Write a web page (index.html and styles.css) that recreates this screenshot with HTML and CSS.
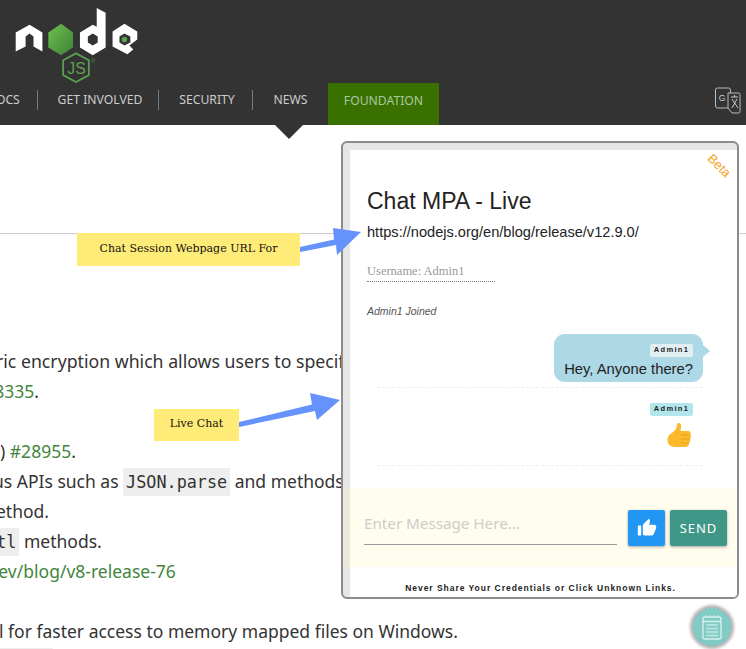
FILE: index.html
```html
<!DOCTYPE html>
<html lang="en">
<head>
    <meta charset="UTF-8">
    <meta name="viewport" content="width=device-width, initial-scale=1.0">
    <title>Node.js - Chat MPA</title>
    <link rel="stylesheet" href="styles.css">
</head>
<body>
    <header class="site-header">
        <svg class="logo" width="150" height="84" viewBox="0 0 150 84">
            <defs>
                <linearGradient id="leaf" x1="0" y1="0" x2="1" y2="1">
                    <stop offset="0" stop-color="#6cc24a"/>
                    <stop offset="1" stop-color="#3f7f3a"/>
                </linearGradient>
            </defs>
            <path fill="#fff" d="M15 33 29 25 42 33V52L33 47V37L29 34 25 37V47L15 52Z"/>
            <path fill="url(#leaf)" d="M61 24 73 33V48L61 56 48 48V33Z"/>
            <path fill="#fff" fill-rule="evenodd" d="M97 8 106 13V48L93 56 80 48V33L93 25 97 27ZM93 34 88 37V43L93 46 98 43V37Z"/>
            <path fill="#fff" d="M125 24 138 32V40L130 46 134 50 128 55 113 47V32Z"/>
            <path fill="#333" d="M125 34 120 37V43L125 46 131 43V37Z"/>
            <circle cx="125" cy="40" r="2.800" fill="#5fa04e"/>
            <path fill="none" stroke="#5a9f4f" stroke-width="1.800" d="M76 54 89 61V76L76 83 63 76V61Z"/>
            <text class="logo-js" x="76.500" y="75" text-anchor="middle">JS</text>
            <circle cx="93.500" cy="61" r="1.600" fill="none" stroke="#5fa04e" stroke-width=".5"/>
        </svg>
        <nav class="site-nav">
            <a class="nav-item nav-docs">DOCS</a>
            <a class="nav-item nav-involved">GET INVOLVED</a>
            <a class="nav-item nav-security">SECURITY</a>
            <a class="nav-item nav-news">NEWS</a>
            <a class="nav-item nav-foundation">FOUNDATION</a>
            <svg class="translate-icon" width="28" height="28" viewBox="0 0 28 28">
                <rect x="1.500" y="1" width="15" height="20" rx="2" fill="#333" stroke="#bbb"/>
                <text class="translate-g" x="8" y="13.500" text-anchor="middle">G</text>
                <path fill="#333" stroke="#bbb" d="M14 6H24.500A1.500 1.500 0 0 1 26 7.500V24.500A1.500 1.500 0 0 1 24.500 26H18L14 21Z"/>
                <path fill="none" stroke="#ccc" d="M17 10H24M20.500 8V10M23 12 18 21M18 12 24 21"/>
            </svg>
        </nav>
    </header>
    <div class="nav-pointer"></div>

    <main class="article">
        <hr class="rule">
        <p class="line line-first">ric encryption which allows users to specify a key</p>
        <p class="line line-cut"><a>#28335</a>.</p>
        <p class="line blank"></p>
        <p class="line"><span>)</span> <a>#28955</a>.</p>
        <p class="line line-apis">us APIs such as <code>JSON.parse</code> and methods</p>
        <p class="line line-method">ethod.</p>
        <p class="line line-code"><code>Intl</code> methods.</p>
        <p class="line line-link"><a>v8.dev/blog/v8-release-76</a></p>
        <p class="line blank"></p>
        <p class="line line-last">l for faster access to memory mapped files on Windows.</p>
        <p class="line"><code class="tail-code">process</code></p>
    </main>

    <section class="chat-panel">
        <div class="chat-inner">
            <h2 class="chat-title">Chat MPA - Live</h2>
            <div class="chat-url">https://nodejs.org/en/blog/release/v12.9.0/</div>
            <div class="chat-user">Username: Admin1</div>
            <div class="chat-status">Admin1 Joined</div>
            <div class="messages">
                <div class="message">
                    <div class="bubble">
                        <span class="sender">Admin1</span>
                        <div class="bubble-text">Hey, Anyone there?</div>
                    </div>
                </div>
                <div class="message message-like">
                    <span class="sender sender-plain">Admin1</span>
                    <svg class="like-emoji" width="26" height="27" viewBox="0 0 26 27">
                        <path fill="#fbb92b" d="M12.500 1C14.500 1 15.500 2.500 15.200 4.500L14.500 9H22C24.500 9 25 11 24.500 12.500 25.500 14 25 16 24 17 24.500 18.500 24 20.500 23 21 23 23.500 21.500 25 19.500 25H10C6 25 1.500 24 1.500 18 1.500 14 4 12 6.500 10.500 8.500 9 10.500 7 11 3 11.100 1.800 11.500 1 12.500 1Z"/>
                        <path fill="none" stroke="#e39a17" stroke-width=".8" d="M15 13H24M15 17H24M15 21H23"/>
                    </svg>
                </div>
            </div>
            <form class="composer">
                <input class="composer-input" type="text" placeholder="Enter Message Here...">
                <button class="btn btn-like" type="button">
                    <svg width="20" height="20" viewBox="0 0 24 24"><path fill="#fff" d="M1 21h4V9H1v12zm22-11c0-1.100-.9-2-2-2h-6.310l.95-4.570.03-.32c0-.41-.17-.79-.44-1.060L14.170 1 7.590 7.590C7.220 7.950 7 8.450 7 9v10c0 1.100.9 2 2 2h9c.83 0 1.540-.5 1.840-1.220l3.020-7.050c.09-.23.14-.47.14-.73v-2z"/></svg>
                </button>
                <button class="btn btn-send" type="button">SEND</button>
            </form>
            <div class="chat-note">Never Share Your Credentials or Click Unknown Links.</div>
        </div>
        <span class="beta">Beta</span>
    </section>

    <div class="note note-url">Chat Session Webpage URL For</div>
    <div class="note note-live">Live Chat</div>

    <svg class="arrows" width="746" height="649" viewBox="0 0 746 649">
        <path fill="#6693fb" d="M300 247 334 239.500 333 228 361 232 337 255 336 245 300 252Z"/>
        <path fill="#6693fb" d="M239 422 312 404.500 310 393 340 400 317 420 315 411 239 427Z"/>
    </svg>

    <button class="fab" type="button">
        <svg width="20" height="25" viewBox="0 0 20 25">
            <rect x="1" y="2" width="18" height="22" rx="2" fill="none" stroke="#d8f0ec" stroke-width="1.400"/>
            <path fill="none" stroke="#d8f0ec" stroke-width="1.400" d="M4 2V.5M8 2V.5M12 2V.5M16 2V.5M1 6.500H19"/>
            <path fill="none" stroke="#b6e2dc" stroke-width="1.800" d="M4 10H16M4 13.500H16M4 17H16M4 20.500H16"/>
        </svg>
    </button>
</body>
</html>
```

FILE: styles.css
```css
* {
    box-sizing: border-box;
}

html, body {
    width: 746px;
    height: 649px;
    margin: 0;
    overflow: hidden;
}

body {
    position: relative;
    background-color: #fff;
    font-family: "Noto Sans", sans-serif;
    color: #333;
}

/* header */

.site-header {
    height: 125px;
    background-color: #333;
}

.logo {
    display: block;
    height: 83px;
}

.logo-js {
    font-family: "Liberation Sans", sans-serif;
    font-size: 16px;
    fill: #5fa04e;
}

.site-nav {
    display: flex;
    align-items: center;
    height: 42px;
    margin-left: -20px;
    padding-bottom: 8px;
    position: relative;
}

.nav-item {
    font-size: 12.200px;
    color: #ccc;
    white-space: nowrap;
    text-align: center;
    line-height: 20px;
}

.nav-docs { width: 58px; border-right: 1px solid #6a7f8f; text-align: left; padding-left: 7px; }
.nav-involved { width: 121px; border-right: 1px solid #6a7f8f; padding-left: 4px; }
.nav-security { width: 94px; border-right: 1px solid #6a7f8f; padding-left: 3px; }
.nav-news { width: 75px; }

.nav-foundation {
    align-self: flex-start;
    width: 111px;
    height: 42px;
    line-height: 35px;
    background-color: #3a7000;
    color: #a9c9a0;
}

.translate-icon {
    position: absolute;
    left: 734px;
    top: 4px;
}

.translate-g {
    font-family: "Liberation Sans", sans-serif;
    font-size: 8.500px;
    fill: #ccc;
}

.nav-pointer {
    position: absolute;
    left: 275px;
    top: 125px;
    border-left: 14px solid transparent;
    border-right: 14px solid transparent;
    border-top: 14px solid #333;
}

/* article text under the chat panel */

.article {
    padding-top: 108px;
    font-size: 17.500px;
}

.rule {
    height: 1px;
    margin: 0 0 112px;
    border: 0;
    background-color: #ccc;
}

.line {
    height: 30px;
    margin: 0;
    line-height: 30px;
    white-space: nowrap;
}

.line a {
    color: #43853d;
}

.line code {
    padding: 4px 3px;
    background-color: #eee;
    font-family: "DejaVu Sans Mono", monospace;
    font-size: 16.800px;
}

.line-first { margin-left: -4px; font-size: 17.700px; }
.line-cut { margin-left: -27px; }
.line-apis { margin-left: -7px; }
.line-method { margin-left: -4px; }
.line-code { margin-left: -27px; }
.line-link { margin-left: -36px; }
.line-last { margin-left: -1px; }

.tail-code {
    margin-left: -24px;
}

/* chat panel */

.chat-panel {
    position: absolute;
    left: 341px;
    top: 141px;
    width: 398px;
    height: 458px;
    padding: 7px 0 0 7px;
    border: 2px solid #8c8c8c;
    border-radius: 6px;
    background-color: #e6e6e6;
    overflow: hidden;
}

.chat-inner {
    height: 100%;
    background-color: #fff;
    font-family: "Liberation Sans", sans-serif;
    color: #222;
}

.chat-title {
    margin: 0;
    padding: 38px 0 0 17px;
    font-size: 23px;
    font-weight: normal;
    line-height: 27px;
}

.chat-url {
    margin-top: 8px;
    padding-left: 17px;
    font-size: 14.600px;
    line-height: 18px;
}

.chat-user {
    width: 128px;
    height: 19px;
    margin: 22px 0 0 17px;
    border-bottom: 1px dotted #777;
    font-family: "Liberation Serif", serif;
    font-size: 12.500px;
    line-height: 16px;
    color: #999;
}

.chat-status {
    margin: 22px 0 0 17px;
    font-size: 10.500px;
    font-style: italic;
    line-height: 14px;
    color: #555;
}

.messages {
    margin: 16px 34px 0 27px;
}

.message {
    display: flex;
    flex-direction: column;
    align-items: flex-end;
    height: 54px;
    border-bottom: 1px dashed #eee;
}

.message-like {
    height: 78px;
    padding: 15px 10px 0 0;
}

.bubble {
    position: relative;
    width: 149px;
    height: 48px;
    padding: 10px 10px 0 0;
    border-radius: 11px;
    background-color: #add8e6;
    text-align: right;
}

.bubble::after {
    content: "";
    position: absolute;
    left: 149px;
    top: 11px;
    border-top: 6px solid transparent;
    border-bottom: 6px solid transparent;
    border-left: 7px solid #add8e6;
}

.sender {
    display: block;
    width: 43px;
    height: 13px;
    margin-left: auto;
    border-radius: 2px;
    background-color: #e1eff5;
    font-size: 7.500px;
    font-weight: bold;
    line-height: 12px;
    letter-spacing: 1.300px;
    text-align: center;
}

.sender-plain {
    background-color: #b2e6ec;
}

.bubble-text {
    margin-top: 3px;
    font-size: 14.800px;
    line-height: 18px;
    white-space: nowrap;
}

.like-emoji {
    display: block;
    margin: 6px 1px 0 0;
}

.composer {
    display: flex;
    align-items: flex-start;
    gap: 5px;
    height: 79px;
    margin: 22px 0 0 -7px;
    padding: 22px 10px 0 21px;
    background-color: rgba(255, 243, 150, 0.17);
}

.composer-input {
    flex: 1;
    min-width: 0;
    height: 35px;
    margin-right: 6px;
    padding: 0 0 9px;
    border: 0;
    border-bottom: 1px solid #999;
    background: transparent;
    font-family: "Noto Sans", sans-serif;
    font-size: 15.200px;
    outline: none;
}

.composer-input::placeholder {
    color: #ccc;
}

.btn {
    display: flex;
    align-items: center;
    justify-content: center;
    height: 36px;
    padding: 0;
    border: 0;
    border-radius: 2px;
    box-shadow: 0 1px 3px rgba(0, 0, 0, 0.35);
    color: #fff;
}

.btn-like {
    width: 37px;
    background-color: #2196f3;
}

.btn-send {
    width: 57px;
    background-color: #3f9787;
    font-family: "Noto Sans", sans-serif;
    font-size: 13px;
    letter-spacing: 1px;
}

.chat-note {
    margin-top: 15px;
    padding-right: 6px;
    font-size: 8.500px;
    font-weight: bold;
    line-height: 12px;
    letter-spacing: .97px;
    text-align: center;
    white-space: nowrap;
}

.beta {
    position: absolute;
    right: 4px;
    top: 15px;
    font-family: "Liberation Sans", sans-serif;
    font-size: 13px;
    color: #f5a623;
    transform: rotate(45deg);
}

/* annotations drawn over the screenshot */

.note {
    position: absolute;
    display: flex;
    align-items: center;
    justify-content: center;
    padding-bottom: 3px;
    background-color: #ffec78;
    font-family: "DejaVu Serif", serif;
    font-size: 11px;
    color: #111;
}

.note-url {
    left: 77px;
    top: 233px;
    width: 223px;
    height: 33px;
}

.note-live {
    left: 154px;
    top: 409px;
    width: 85px;
    height: 32px;
}

.arrows {
    position: absolute;
    left: 0;
    top: 0;
    pointer-events: none;
}

.fab {
    position: absolute;
    left: 693px;
    top: 608px;
    display: flex;
    align-items: center;
    justify-content: center;
    width: 38px;
    height: 38px;
    padding: 0;
    border: 0;
    border-radius: 50%;
    background-color: #80cbc4;
    box-shadow: 0 0 3px 3px #b5b5b5;
}
```
